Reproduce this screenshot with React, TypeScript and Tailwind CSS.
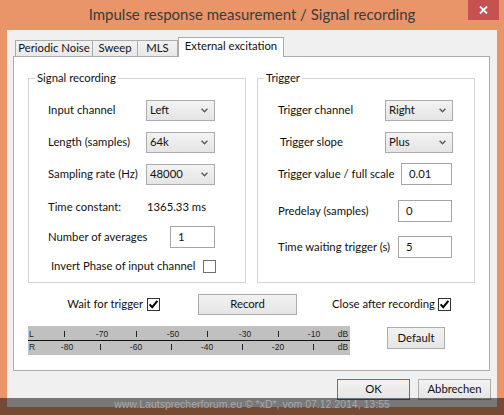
import type { ReactNode } from 'react'

const Chevron = () => (
  <svg width="7" height="5" viewBox="0 0 7 5" className="shrink-0">
    <path d="M0.6 0.8 L3.5 3.8 L6.4 0.8" fill="none" stroke="#5a5a5a" strokeWidth="1.4" />
  </svg>
)

const ComboBox = ({ value, className = '' }: { value: string; className?: string }) => (
  <div
    className={`flex h-[21px] items-center justify-between border border-[#acacac] bg-linear-to-b from-[#f2f2f2] to-[#e5e5e5] pl-[3px] pr-[6px] ${className}`}
  >
    <span>{value}</span>
    <Chevron />
  </div>
)

const TextBox = ({ value, className = '' }: { value: string; className?: string }) => (
  <div className={`flex h-[22px] items-center border border-[#a6a6a6] bg-white pl-[7px] ${className}`}>
    {value}
  </div>
)

const CheckBox = ({ checked = false }: { checked?: boolean }) => (
  <div
    className={`flex h-[13px] w-[13px] shrink-0 items-center justify-center border bg-white ${
      checked ? 'border-[#333333]' : 'border-[#707070]'
    }`}
  >
    {checked && (
      <svg width="11" height="11" viewBox="0 0 11 11">
        <path d="M1.6 5.4 L4.2 8.2 L9.4 1.8" fill="none" stroke="#000" strokeWidth="2" />
      </svg>
    )}
  </div>
)

const Button = ({
  children,
  className = '',
  primary = false,
}: {
  children: ReactNode
  className?: string
  primary?: boolean
}) => (
  <div
    className={`flex items-center justify-center border bg-linear-to-b from-[#f2f2f2] to-[#e5e5e5] ${
      primary ? 'border-[#3c7fb1]' : 'border-[#acacac]'
    } ${className}`}
  >
    {children}
  </div>
)

const Tab = ({ label, className = '' }: { label: string; className?: string }) => (
  <div
    className={`flex h-[16px] items-center justify-center border border-b-0 border-[#acacac] bg-linear-to-b from-[#f2f2f2] to-[#e8e8e8] ${className}`}
  >
    {label}
  </div>
)

// level meter scale, 10 dB per step
const topLabels = [
  { x: 74, t: '-70' },
  { x: 145, t: '-50' },
  { x: 217, t: '-30' },
  { x: 286, t: '-10' },
]
const topTicks = [36, 108, 179, 250]
const bottomLabels = [
  { x: 39, t: '-80' },
  { x: 108, t: '-60' },
  { x: 179, t: '-40' },
  { x: 250, t: '-20' },
]
const bottomTicks = [72, 143, 214, 285]

const LevelMeter = () => (
  <svg width="322" height="29" viewBox="0 0 322 29" className="shrink-0 bg-[#c0c0c0]">
    <g fontFamily="'Liberation Sans', Arial, sans-serif" fontSize="8.5" fill="#222">
      <text x="1" y="11">L</text>
      <text x="1" y="24">R</text>
      {topLabels.map((l) => (
        <text key={l.t} x={l.x} y="11" textAnchor="middle">
          {l.t}
        </text>
      ))}
      {bottomLabels.map((l) => (
        <text key={l.t} x={l.x} y="24" textAnchor="middle">
          {l.t}
        </text>
      ))}
      <text x="315" y="11" textAnchor="middle">dB</text>
      <text x="315" y="24" textAnchor="middle">dB</text>
    </g>
    {topTicks.map((x) => (
      <rect key={x} x={x} y="5" width="1" height="6" fill="#222" />
    ))}
    {bottomTicks.map((x) => (
      <rect key={x} x={x} y="18" width="1" height="6" fill="#222" />
    ))}
    <rect x="0" y="14" width="322" height="1" fill="#111" />
  </svg>
)

export default function App() {
  return (
    <div className="relative h-[415px] w-[504px] overflow-hidden whitespace-nowrap bg-[#ea9469] font-['Lato',sans-serif] text-[11.3px] text-[#111]">
      {/* title bar */}
      <div className="flex h-[30px] items-center justify-center pb-[1px] text-[15px] text-[#3b3b3b]">
        Impulse response measurement / Signal recording
      </div>
      <div className="absolute right-[5px] top-0 flex h-[20px] w-[31px] items-center justify-center bg-[#c75050]">
        <svg width="9" height="8" viewBox="0 0 9 8">
          <path d="M1 0.5 L8 7.5 M8 0.5 L1 7.5" stroke="#fff" strokeWidth="1.8" />
        </svg>
      </div>

      {/* client area */}
      <div className="ml-[7px] h-[377px] w-[490px] bg-[#f0f0f0] pl-[6px] pt-[7px]">
        <div className="ml-[2px] flex h-[19px] items-end">
          <Tab label="Periodic Noise" className="w-[78px]" />
          <Tab label="Sweep" className="-ml-px w-[46px]" />
          <Tab label="MLS" className="-ml-px w-[41px]" />
          <div className="relative z-10 -mb-px flex h-[20px] w-[106px] items-center justify-center border border-b-0 border-[#acacac] bg-white pb-[2px]">
            External excitation
          </div>
        </div>

        <div className="h-[315px] w-[477px] border border-[#acacac] bg-white px-[14px] pt-[13px]">
          <div className="flex gap-[11px]">
            <fieldset className="h-[213px] w-[218px] border border-[#d5d5d5]">
              <legend className="ml-[6px] px-[2px] leading-[16px]">Signal recording</legend>
              <div className="flex flex-col pl-[19px]">
                <div className="mt-[14px] flex h-[21px] items-center">
                  <span className="w-[98px]">Input channel</span>
                  <ComboBox value="Left" className="w-[69px]" />
                </div>
                <div className="mt-[11px] flex h-[21px] items-center">
                  <span className="w-[98px]">Length (samples)</span>
                  <ComboBox value="64k" className="w-[69px]" />
                </div>
                <div className="mt-[11px] flex h-[21px] items-center">
                  <span className="w-[98px]">Sampling rate (Hz)</span>
                  <ComboBox value="48000" className="w-[69px]" />
                </div>
                <div className="mt-[12px] flex h-[21px] items-center">
                  <span className="w-[99px]">Time constant:</span>
                  <span>1365.33 ms</span>
                </div>
                <div className="mt-[8px] flex h-[22px] items-center">
                  <span className="w-[122px]">Number of averages</span>
                  <TextBox value="1" className="w-[45px]" />
                </div>
                <div className="mt-[8px] flex h-[21px] items-center pl-[3px]">
                  <span className="w-[152px]">Invert Phase of input channel</span>
                  <CheckBox />
                </div>
              </div>
            </fieldset>

            <fieldset className="h-[213px] w-[218px] border border-[#d5d5d5]">
              <legend className="ml-[6px] px-[2px] leading-[16px]">Trigger</legend>
              <div className="flex flex-col pl-[20px]">
                <div className="mt-[14px] flex h-[21px] items-center">
                  <span className="w-[107px]">Trigger channel</span>
                  <ComboBox value="Right" className="w-[68px]" />
                </div>
                <div className="mt-[11px] flex h-[21px] items-center">
                  <span className="w-[107px] pl-[2px]">Trigger slope</span>
                  <ComboBox value="Plus" className="w-[68px]" />
                </div>
                <div className="mt-[10px] flex h-[22px] items-center">
                  <span className="w-[123px]">Trigger value / full scale</span>
                  <TextBox value="0.01" className="w-[51px]" />
                </div>
                <div className="mt-[15px] flex h-[22px] items-center">
                  <span className="w-[120px]">Predelay (samples)</span>
                  <TextBox value="0" className="w-[54px]" />
                </div>
                <div className="mt-[14px] flex h-[22px] items-center">
                  <span className="w-[120px]">Time waiting trigger (s)</span>
                  <TextBox value="5" className="w-[54px]" />
                </div>
              </div>
            </fieldset>
          </div>

          <div className="mt-[11px] flex h-[21px] items-center">
            <div className="flex w-[132px] items-center justify-end gap-[4px]">
              <span>Wait for trigger</span>
              <CheckBox checked />
            </div>
            <Button className="ml-[38px] h-[21px] w-[99px]">Record</Button>
            <div className="flex w-[154px] items-center justify-end gap-[3px]">
              <span>Close after recording</span>
              <CheckBox checked />
            </div>
          </div>

          <div className="mt-[11px] flex items-start">
            <LevelMeter />
            <Button className="ml-[37px] mt-[1px] h-[22px] w-[58px]">Default</Button>
          </div>
        </div>

        <div className="mt-[8px] flex justify-end gap-[8px] pr-[6px]">
          <Button primary className="h-[21px] w-[73px]">
            OK
          </Button>
          <Button className="h-[21px] w-[73px]">Abbrechen</Button>
        </div>
      </div>

      <div className="absolute bottom-0 left-0 right-0 h-[17px] bg-black/50 text-center font-['Liberation_Sans',Arial,sans-serif] text-[10.5px] leading-[12px] text-[#a8a8a8]">
        www.Lautsprecherforum.eu © *xD*, vom 07.12.2014, 13:55
      </div>
    </div>
  )
}
